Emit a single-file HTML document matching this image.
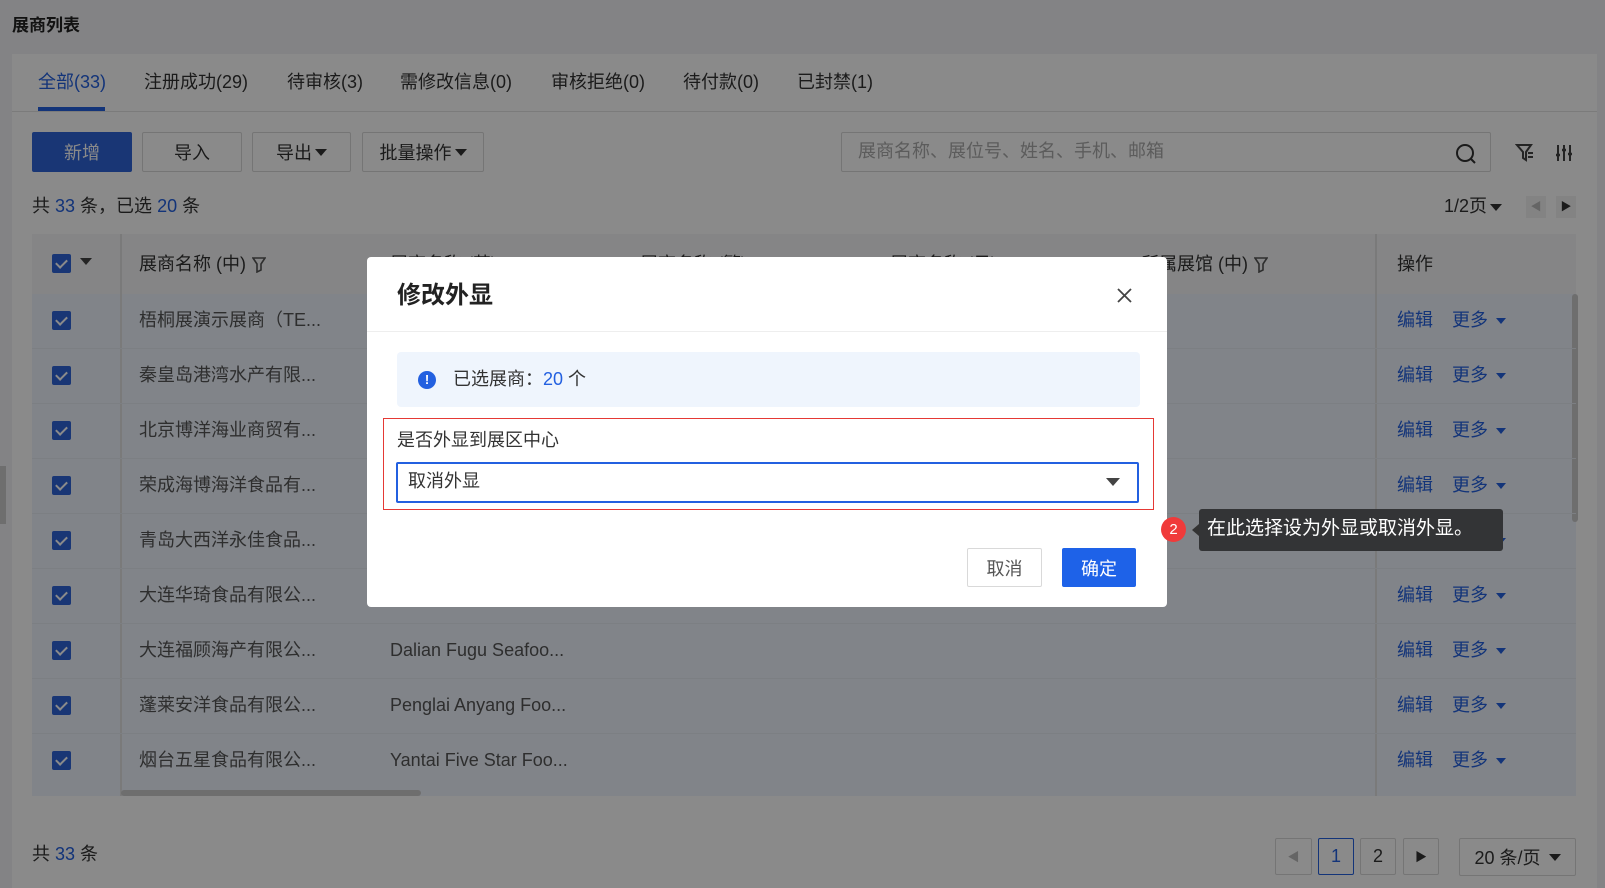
<!DOCTYPE html>
<html><head><meta charset="utf-8"><style>
*{box-sizing:border-box;margin:0;padding:0}
body{width:1605px;height:888px;overflow:hidden;position:relative;background:#fff;font-family:"Liberation Sans","Noto Sans CJK SC",sans-serif;color:#333;font-size:18px}
.a{position:absolute;white-space:nowrap;line-height:24px}
.btn{position:absolute;border:1px solid #d9d9d9;background:#fff;display:flex;align-items:center;justify-content:center;font-size:18px;color:#333;border-radius:2px}
.cb{position:absolute;width:19px;height:19px;background:#2f64d8;border-radius:2px}
.cb:after{content:"";position:absolute;left:6px;top:3px;width:5px;height:9px;border:solid #fff;border-width:0 2px 2px 0;transform:rotate(45deg)}
.tri{display:inline-block;width:0;height:0;border-left:6px solid transparent;border-right:6px solid transparent;border-top:7px solid currentColor;vertical-align:middle;margin-left:3px}
.blue{color:#2360e0}
.fn{display:inline-block;vertical-align:middle;margin-left:6px}
</style></head><body>
<div class="a" style="left:0;top:0;width:1605px;height:888px;background:#f2f3f5"></div>
<div class="a" style="left:12px;top:14px;font-size:17px;font-weight:bold;color:#222">展商列表</div>
<div class="a" style="left:12px;top:54px;width:1585px;height:834px;background:#fff"></div>
<div class="a" style="left:12px;top:111px;width:1585px;height:1px;background:#e4e4e4"></div>
<div class="a blue" style="left:38px;top:70px">全部(33)</div>
<div class="a" style="left:38px;top:107px;width:67px;height:4px;background:#2360e0"></div>
<div class="a" style="left:144px;top:70px">注册成功(29)</div>
<div class="a" style="left:287px;top:70px">待审核(3)</div>
<div class="a" style="left:400px;top:70px">需修改信息(0)</div>
<div class="a" style="left:551px;top:70px">审核拒绝(0)</div>
<div class="a" style="left:683px;top:70px">待付款(0)</div>
<div class="a" style="left:797px;top:70px">已封禁(1)</div>
<div class="btn" style="left:32px;top:132px;width:100px;height:40px;background:#2f64d8;border-color:#2f64d8;color:#fff">新增</div>
<div class="btn" style="left:142px;top:132px;width:100px;height:40px">导入</div>
<div class="btn" style="left:252px;top:132px;width:99px;height:40px">导出<span class="tri"></span></div>
<div class="btn" style="left:362px;top:132px;width:122px;height:40px">批量操作<span class="tri"></span></div>
<div class="a" style="left:841px;top:132px;width:650px;height:40px;border:1px solid #d9d9d9;border-radius:2px"></div>
<div class="a" style="left:858px;top:139px;color:#aaa">展商名称、展位号、姓名、手机、邮箱</div>
<svg class="a" style="left:1454px;top:142px" width="24" height="24" viewBox="0 0 24 24"><circle cx="11" cy="11" r="8" fill="none" stroke="#333" stroke-width="2"/><path d="M17 17l4 4" stroke="#333" stroke-width="2"/></svg>
<svg class="a" style="left:1515px;top:143px" width="20" height="20" viewBox="0 0 20 20"><path d="M2 2h14l-5 7v8l-3-2V9z" fill="none" stroke="#444" stroke-width="2"/><path d="M13 10h5M13 14h5" stroke="#444" stroke-width="2"/></svg>
<svg class="a" style="left:1555px;top:143px" width="18" height="20" viewBox="0 0 18 20"><path d="M3 2v16M9 2v16M15 2v16" stroke="#444" stroke-width="2"/><path d="M1 12h4M7 7h4M13 11h4" stroke="#444" stroke-width="2.5"/></svg>
<div class="a" style="left:32px;top:194px">共 <span class="blue">33</span> 条，已选 <span class="blue">20</span> 条</div>
<div class="a" style="left:1444px;top:194px">1/2页<span class="tri"></span></div>
<div class="a" style="left:1526px;top:196px;width:20px;height:22px;background:#f3f3f3;color:#bbb;font-size:11px;text-align:center;line-height:22px">◀</div>
<div class="a" style="left:1556px;top:196px;width:20px;height:22px;background:#f3f3f3;color:#333;font-size:11px;text-align:center;line-height:22px">▶</div>
<div class="a" style="left:32px;top:234px;width:1544px;height:60px;background:#f5f6f7"></div>
<div class="a" style="left:32px;top:294px;width:1544px;height:502px;background:#eef4fe"></div>
<div class="a" style="left:120px;top:234px;width:2px;height:562px;background:#e2e2e2"></div>
<div class="a" style="left:1375px;top:234px;width:2px;height:562px;background:#e2e2e2"></div>
<div class="cb" style="left:52px;top:254px"></div><div class="a" style="left:80px;top:258px;width:0;height:0;border-left:6px solid transparent;border-right:6px solid transparent;border-top:7px solid #444"></div>
<div class="a" style="left:139px;top:252px">展商名称 (中)<svg class="fn" width="14" height="16" viewBox="0 0 14 16"><path d="M1 1h12l-4 6v6l-4 2V7z" fill="none" stroke="#555" stroke-width="1.6"/></svg></div>
<div class="a" style="left:390px;top:252px">展商名称 (英)</div>
<div class="a" style="left:640px;top:252px">展商名称 (繁)</div>
<div class="a" style="left:890px;top:252px">展商名称 (日)</div>
<div class="a" style="left:1141px;top:252px">所属展馆 (中)<svg class="fn" width="14" height="16" viewBox="0 0 14 16"><path d="M1 1h12l-4 6v6l-4 2V7z" fill="none" stroke="#555" stroke-width="1.6"/></svg></div>
<div class="a" style="left:1397px;top:252px">操作</div>
<div class="a" style="left:1572px;top:294px;width:6px;height:228px;background:#ccc;border-radius:3px"></div>
<div class="a" style="left:121px;top:790px;width:300px;height:6px;background:#ccc;border-radius:3px"></div>
<div id="rows"></div>
<div class="a" style="left:32px;top:842px">共 <span class="blue">33</span> 条</div>
<div class="btn" style="left:1275px;top:838px;width:37px;height:37px;color:#bbb;font-size:12px">◀</div>
<div class="btn" style="left:1318px;top:838px;width:36px;height:37px;border-color:#2360e0;color:#2360e0">1</div>
<div class="btn" style="left:1360px;top:838px;width:36px;height:37px">2</div>
<div class="btn" style="left:1403px;top:838px;width:36px;height:37px;font-size:12px">▶</div>
<div class="btn" style="left:1459px;top:838px;width:117px;height:38px">20 条/页<span class="tri" style="margin-left:8px"></span></div>
<div class="a" style="left:0;top:466px;width:6px;height:58px;background:#ccc"></div>
<div class="a" style="left:0;top:0;width:1605px;height:888px;background:rgba(0,0,0,0.46)"></div>
<div class="a" style="left:367px;top:257px;width:800px;height:350px;background:#fff;border-radius:4px"></div>
<div class="a" style="left:397px;top:281px;font-size:24px;font-weight:bold;color:#222;line-height:30px">修改外显</div>
<svg class="a" style="left:1116px;top:287px" width="17" height="17" viewBox="0 0 17 17"><path d="M2 2l13 13M15 2L2 15" stroke="#444" stroke-width="1.8"/></svg>
<div class="a" style="left:367px;top:331px;width:800px;height:1px;background:#eee"></div>
<div class="a" style="left:397px;top:352px;width:743px;height:55px;background:#eff5fd;border-radius:4px"></div>
<div class="a" style="left:418px;top:371px;width:18px;height:18px;border-radius:50%;background:#2360e0;color:#fff;font-size:13px;font-weight:bold;text-align:center;line-height:18px">!</div>
<div class="a" style="left:453px;top:367px">已选展商：<span class="blue">20</span> 个</div>
<div class="a" style="left:383px;top:418px;width:771px;height:92px;border:1px solid #e53935"></div>
<div class="a" style="left:397px;top:428px">是否外显到展区中心</div>
<div class="a" style="left:396px;top:462px;width:743px;height:41px;border:2px solid #2360e0;border-radius:2px"></div>
<div class="a" style="left:408px;top:469px">取消外显</div>
<div class="a" style="left:1106px;top:478px;width:0;height:0;border-left:7px solid transparent;border-right:7px solid transparent;border-top:8px solid #444"></div>
<div class="btn" style="left:967px;top:548px;width:75px;height:39px;color:#555">取消</div>
<div class="btn" style="left:1062px;top:548px;width:74px;height:39px;background:#1e62e8;border-color:#1e62e8;color:#fff">确定</div>
<div class="a" style="left:1161px;top:517px;width:25px;height:25px;border-radius:50%;background:#f03a3a;color:#fff;font-size:15px;text-align:center;line-height:25px">2</div>
<div class="a" style="left:1192px;top:524px;width:0;height:0;border-top:6px solid transparent;border-bottom:6px solid transparent;border-right:7px solid #333"></div>
<div class="a" style="left:1199px;top:509px;width:304px;height:42px;background:#333436;border-radius:3px"></div>
<div class="a" style="left:1207px;top:517px;color:#fff;font-size:19px">在此选择设为外显或取消外显。</div>
<script>
var n=["梧桐展演示展商（TE...","秦皇岛港湾水产有限...","北京博洋海业商贸有...","荣成海博海洋食品有...","青岛大西洋永佳食品...","大连华琦食品有限公...","大连福顾海产有限公...","蓬莱安洋食品有限公...","烟台五星食品有限公..."];
var e=["Shanghai Wutong...","Qinhuangdao Gang...","Beijing Boyang...","Rongcheng Haibo...","Qingdao Atlantic...","Dalian Huaqi Foo...","Dalian Fugu Seafoo...","Penglai Anyang Foo...","Yantai Five Star Foo..."];
var h="";
for(var i=0;i<9;i++){var c=294+i*55+27;
h+='<div class="cb" style="left:52px;top:'+(c-10)+'px"></div>';
h+='<div class="a" style="left:139px;top:'+(c-13)+'px;color:#555">'+n[i]+'</div>';
h+='<div class="a" style="left:390px;top:'+(c-13)+'px;color:#555">'+e[i]+'</div>';
h+='<div class="a blue" style="left:1397px;top:'+(c-13)+'px">编辑</div><div class="a blue" style="left:1452px;top:'+(c-13)+'px">更多<span class="tri" style="margin-left:8px;border-left-width:5px;border-right-width:5px;border-top-width:6px"></span></div>';
if(i<8)h+='<div class="a" style="left:32px;top:'+(294+i*55+54)+'px;width:1544px;height:1px;background:#e6ebf3"></div>';}
document.getElementById("rows").outerHTML=h;
</script>
</body></html>
